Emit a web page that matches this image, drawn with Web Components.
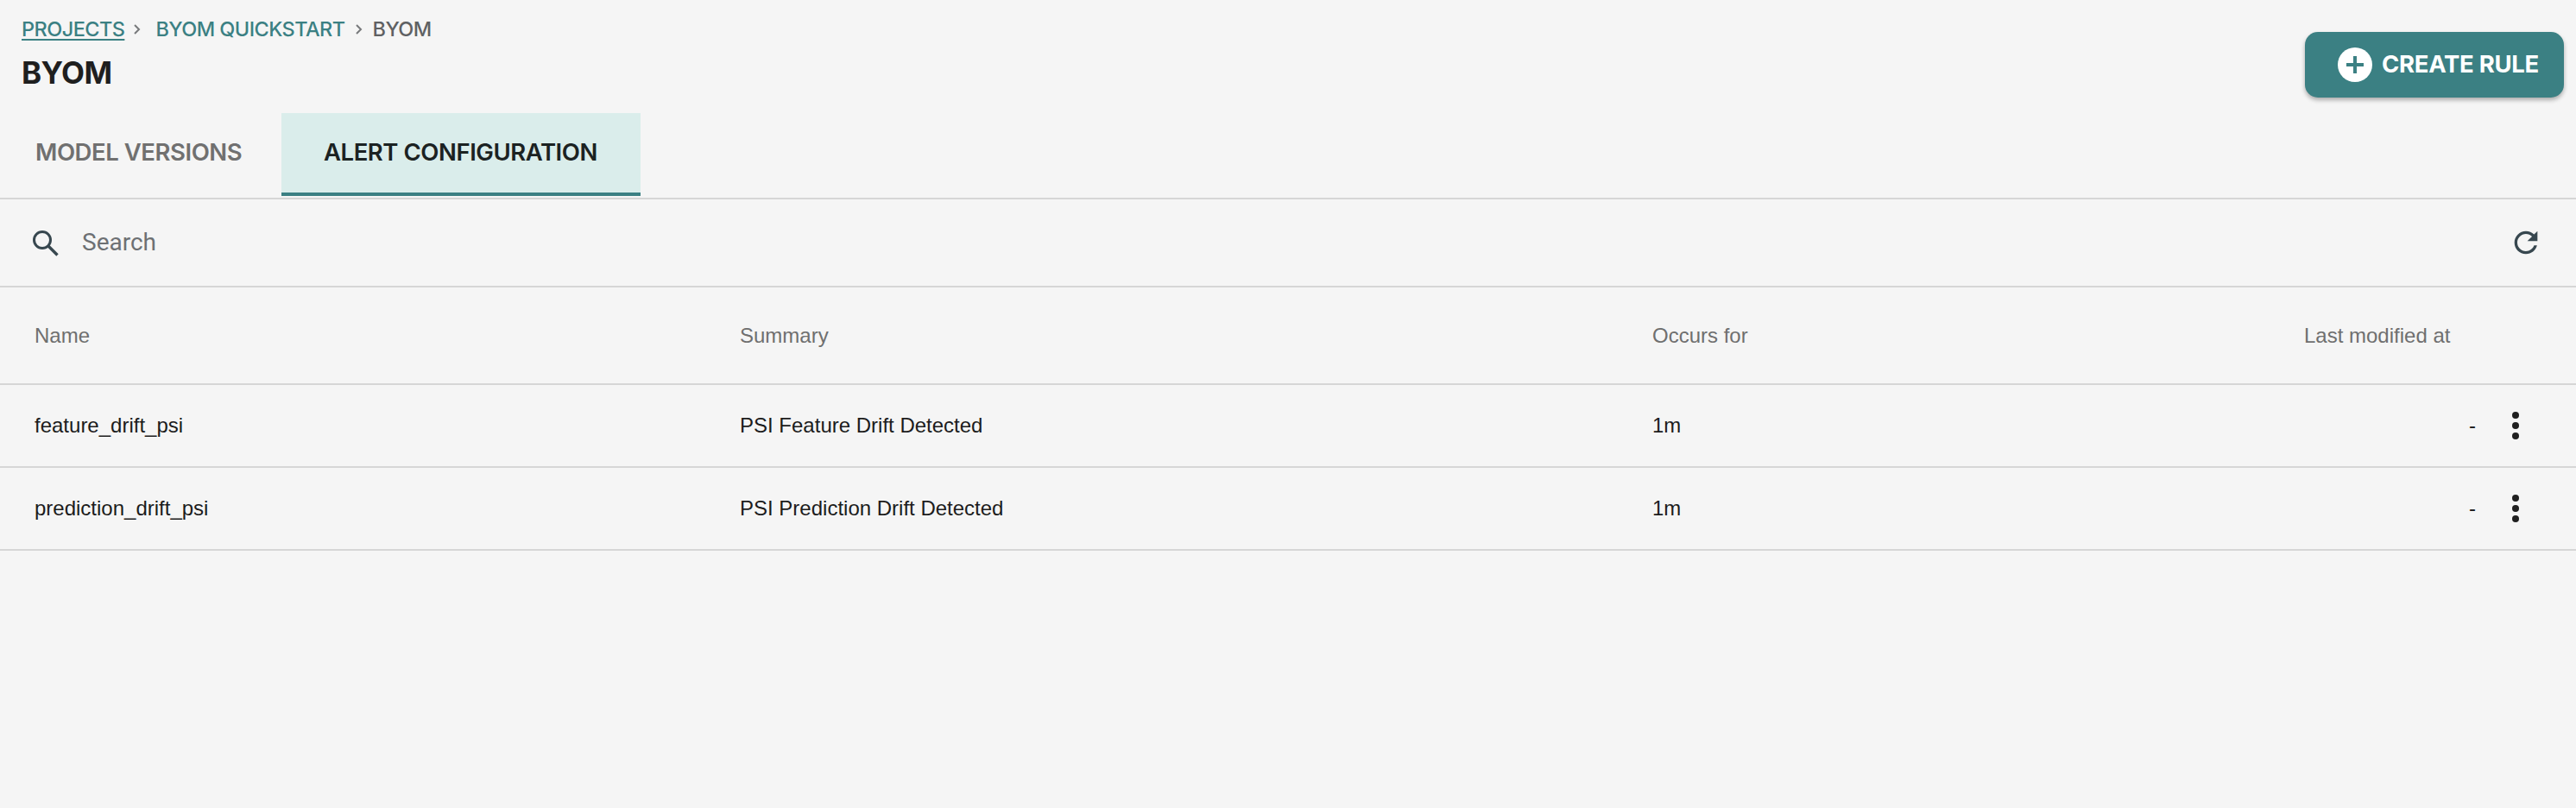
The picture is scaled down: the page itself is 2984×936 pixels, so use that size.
<!DOCTYPE html>
<html>
<head>
<meta charset="utf-8">
<title>BYOM</title>
<style>
  html, body { margin: 0; background: #f5f5f5; }
  body { font-family: "Liberation Sans", Arial, sans-serif; }
</style>
</head>
<body>
<byom-page></byom-page>

<script>
const HEAD_FONT = '"Inter", "Liberation Sans", sans-serif';

class BreadCrumbs extends HTMLElement {
  constructor() {
    super();
    this.attachShadow({ mode: "open" });
    this.shadowRoot.innerHTML = `
      <style>
        :host { display: flex; align-items: center; height: 24px; font: 500 23.5px/24px ${HEAD_FONT}; letter-spacing: -.55px; color: #5f6163; white-space: nowrap; }
        a { color: #3b8083; text-decoration: none; }
        a.first { text-decoration: underline; text-decoration-thickness: 2px; text-underline-offset: 3px; }
        svg { width: 12px; height: 14px; flex: none; }
        .s1 { margin: 0 15px 0 9px; }
        .s2 { margin: 0 10px 0 10px; }
      </style>
      <a class="first">PROJECTS</a>
      <svg class="s1" viewBox="0 0 12 14"><path d="M3 2l5 5-5 5" fill="none" stroke="#77797b" stroke-width="2"/></svg>
      <a>BYOM QUICKSTART</a>
      <svg class="s2" viewBox="0 0 12 14"><path d="M3 2l5 5-5 5" fill="none" stroke="#77797b" stroke-width="2"/></svg>
      <span>BYOM</span>`;
  }
}

class CreateButton extends HTMLElement {
  constructor() {
    super();
    this.attachShadow({ mode: "open" });
    this.shadowRoot.innerHTML = `
      <style>
        :host { display: flex; align-items: center; box-sizing: border-box; width: 300px; height: 76px; padding-left: 38px; gap: 11px; background: #3b8083; border-radius: 15px; box-shadow: 0 3px 5px rgba(0,0,0,.3); color: #fff; font: 700 27.5px/1 ${HEAD_FONT}; letter-spacing: -.3px; white-space: nowrap; }
        svg { width: 40px; height: 40px; flex: none; }
      </style>
      <svg viewBox="0 0 40 40"><circle cx="20" cy="20" r="20" fill="#fff"/><path d="M10 18h8v-8h4v8h8v4h-8v8h-4v-8h-8z" fill="#3b8083"/></svg>
      <slot></slot>`;
  }
}

class TabBar extends HTMLElement {
  constructor() {
    super();
    this.attachShadow({ mode: "open" });
    this.shadowRoot.innerHTML = `
      <style>
        :host { display: flex; height: 98px; border-bottom: 2px solid #d6d6d6; box-sizing: content-box; }
        div { box-sizing: border-box; height: 96px; display: flex; align-items: center; font: 600 27.5px/1 ${HEAD_FONT}; letter-spacing: -.45px; padding-bottom: 4px; white-space: nowrap; }
        .off { width: 326px; padding-left: 41px; color: #707070; }
        .on { width: 416px; padding-left: 49px; color: #1b2222; background: #daedeb; border-bottom: 4px solid #3b8083; padding-bottom: 0; }
      </style>
      <div class="off">MODEL VERSIONS</div>
      <div class="on">ALERT CONFIGURATION</div>`;
  }
}

class SearchBar extends HTMLElement {
  constructor() {
    super();
    this.attachShadow({ mode: "open" });
    this.shadowRoot.innerHTML = `
      <style>
        :host { display: flex; align-items: center; height: 100px; padding: 0 38px 0 34px; border-bottom: 2px solid #d6d6d6; font: 400 28px/1 Roboto, sans-serif; color: #6d7073; }
        .search { width: 36px; height: 36px; margin-right: 25px; flex: none; }
        .grow { flex: 1; }
        .refresh { width: 40px; height: 40px; flex: none; }
      </style>
      <svg class="search" viewBox="0 0 36 36"><circle cx="15" cy="15" r="9.5" fill="none" stroke="#37474f" stroke-width="3"/><path d="M22 22l10.5 10.5" stroke="#37474f" stroke-width="3.4" fill="none"/></svg>
      <span class="grow">Search</span>
      <svg class="refresh" viewBox="0 0 24 24"><path fill="#37474f" d="M17.65 6.35C16.2 4.9 14.21 4 12 4c-4.42 0-7.99 3.58-7.99 8s3.57 8 7.99 8c3.73 0 6.84-2.55 7.73-6h-2.08c-.82 2.33-3.04 4-5.65 4-3.31 0-6-2.69-6-6s2.69-6 6-6c1.66 0 3.14.69 4.22 1.78L13 11h7V4l-2.35 2.35z"/></svg>`;
  }
}

class TableHead extends HTMLElement {
  constructor() {
    super();
    this.attachShadow({ mode: "open" });
    this.shadowRoot.innerHTML = `
      <style>
        :host { display: grid; grid-template-columns: 817px 1057px 755px 1fr; align-items: center; height: 111px; padding-left: 40px; border-bottom: 2px solid #d6d6d6; font: 400 24px/1 "Liberation Sans", Arial, sans-serif; color: #6f6f6f; }
      </style>
      <span>Name</span><span>Summary</span><span>Occurs for</span><span>Last modified at</span>`;
  }
}

class RuleRow extends HTMLElement {
  constructor() {
    super();
    this.attachShadow({ mode: "open" });
    this.shadowRoot.innerHTML = `
      <style>
        :host { display: grid; grid-template-columns: 817px 1057px 755px 1fr; align-items: center; height: 94px; padding-left: 40px; border-bottom: 2px solid #d6d6d6; font: 400 24px/1 "Liberation Sans", Arial, sans-serif; color: #1c1c1c; }
        .last { display: flex; justify-content: flex-end; align-items: center; padding-right: 58px; }
        .dash { margin-right: 34px; }
        svg { width: 24px; height: 36px; margin-right: -0px; flex: none; }
      </style>
      <span id="name"></span><span id="summary"></span><span id="occurs"></span>
      <div class="last">
        <span class="dash">-</span>
        <svg viewBox="0 0 24 36"><circle cx="12" cy="6" r="4" fill="#1f1f1f"/><circle cx="12" cy="18" r="4" fill="#1f1f1f"/><circle cx="12" cy="30" r="4" fill="#1f1f1f"/></svg>
      </div>`;
  }
  connectedCallback() {
    this.shadowRoot.getElementById("name").textContent = this.getAttribute("name") || "";
    this.shadowRoot.getElementById("summary").textContent = this.getAttribute("summary") || "";
    this.shadowRoot.getElementById("occurs").textContent = this.getAttribute("occurs") || "";
  }
}

class ByomPage extends HTMLElement {
  constructor() {
    super();
    this.attachShadow({ mode: "open" });
    this.shadowRoot.innerHTML = `
      <style>
        :host { display: block; }
        header { display: flex; justify-content: space-between; height: 131px; box-sizing: border-box; padding: 22px 14px 0 25px; }
        h1 { margin: 18px 0 0; font: 700 35px/40px ${HEAD_FONT}; letter-spacing: -.6px; color: #1f1f1f; }
        create-button { margin-top: 15px; }
      </style>
      <header>
        <div><bread-crumbs></bread-crumbs><h1>BYOM</h1></div>
        <create-button>CREATE RULE</create-button>
      </header>
      <tab-bar></tab-bar>
      <search-bar></search-bar>
      <table-head></table-head>
      <rule-row name="feature_drift_psi" summary="PSI Feature Drift Detected" occurs="1m"></rule-row>
      <rule-row name="prediction_drift_psi" summary="PSI Prediction Drift Detected" occurs="1m"></rule-row>`;
  }
}

customElements.define("bread-crumbs", BreadCrumbs);
customElements.define("create-button", CreateButton);
customElements.define("tab-bar", TabBar);
customElements.define("search-bar", SearchBar);
customElements.define("table-head", TableHead);
customElements.define("rule-row", RuleRow);
customElements.define("byom-page", ByomPage);
</script>
</body>
</html>
